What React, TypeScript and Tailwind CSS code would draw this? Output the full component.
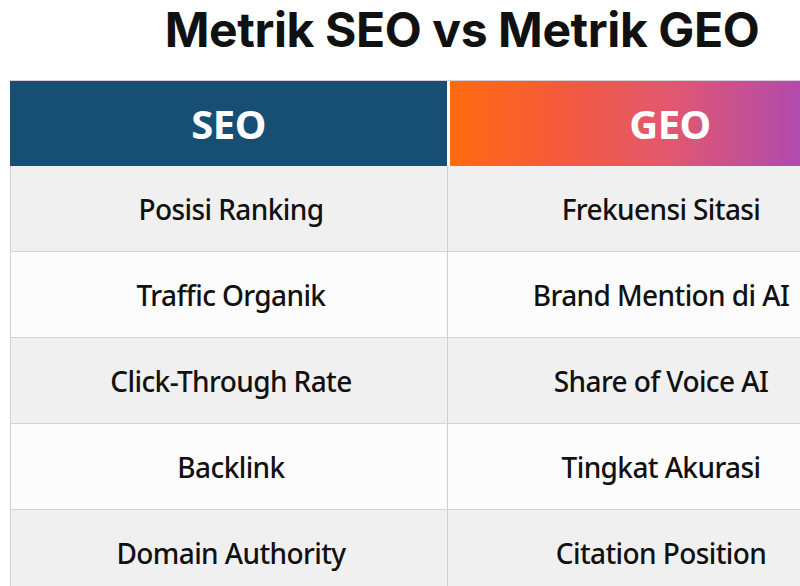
import React from "react";

const rows: [string, string][] = [
  ["Posisi Ranking", "Frekuensi Sitasi"],
  ["Traffic Organik", "Brand Mention di AI"],
  ["Click-Through Rate", "Share of Voice AI"],
  ["Backlink", "Tingkat Akurasi"],
  ["Domain Authority", "Citation Position"],
];

export default function App() {
  return (
    <div className="w-[800px] h-[586px] overflow-hidden bg-white">
      <div className="h-[80px] flex items-center justify-center pl-[124px] pb-[20px]">
        <h1
          className="text-[48px] font-bold text-[#111111] leading-none tracking-[-0.4px] whitespace-nowrap"
          style={{ fontFamily: "Inter, 'Liberation Sans', sans-serif" }}
        >
          Metrik SEO vs Metrik GEO
        </h1>
      </div>
      <div
        className="ml-[10px] w-[880px] flex flex-col"
        style={{ fontFamily: "'Noto Sans', 'Open Sans', sans-serif" }}
      >
        <div className="flex h-[86px] border-t border-[#d8d0d8]">
          <div className="w-[437px] bg-[#164f73] flex items-center justify-center">
            <span className="text-white text-[40px] font-bold leading-none tracking-[-0.5px]">SEO</span>
          </div>
          <div className="w-[3px] bg-white" />
          <div className="flex-1 bg-[linear-gradient(90deg,#ff6a0f_0%,#f45a3c_25%,#e4586c_48%,#b04aae_80%,#a044b8_100%)] flex items-center justify-center">
            <span className="text-white text-[40px] font-bold leading-none tracking-[-0.5px]">GEO</span>
          </div>
        </div>
        {rows.map(([a, b], i) => (
          <div
            key={i}
            className={
              "flex h-[86px] border-b border-[#d4d4d4] " +
              (i % 2 === 0 ? "bg-[#f0f0f0]" : "bg-[#fcfcfc]")
            }
          >
            <div className="w-[438px] border-l border-r border-[#cfcfcf] flex items-center justify-center pl-[4px]">
              <span className="text-[28px] font-medium tracking-[-0.6px] text-[#111111] leading-none">{a}</span>
            </div>
            <div className="flex-1 flex items-center justify-center pr-[16px]">
              <span className="text-[28px] font-medium tracking-[-0.6px] text-[#111111] leading-none">{b}</span>
            </div>
          </div>
        ))}
      </div>
    </div>
  );
}
